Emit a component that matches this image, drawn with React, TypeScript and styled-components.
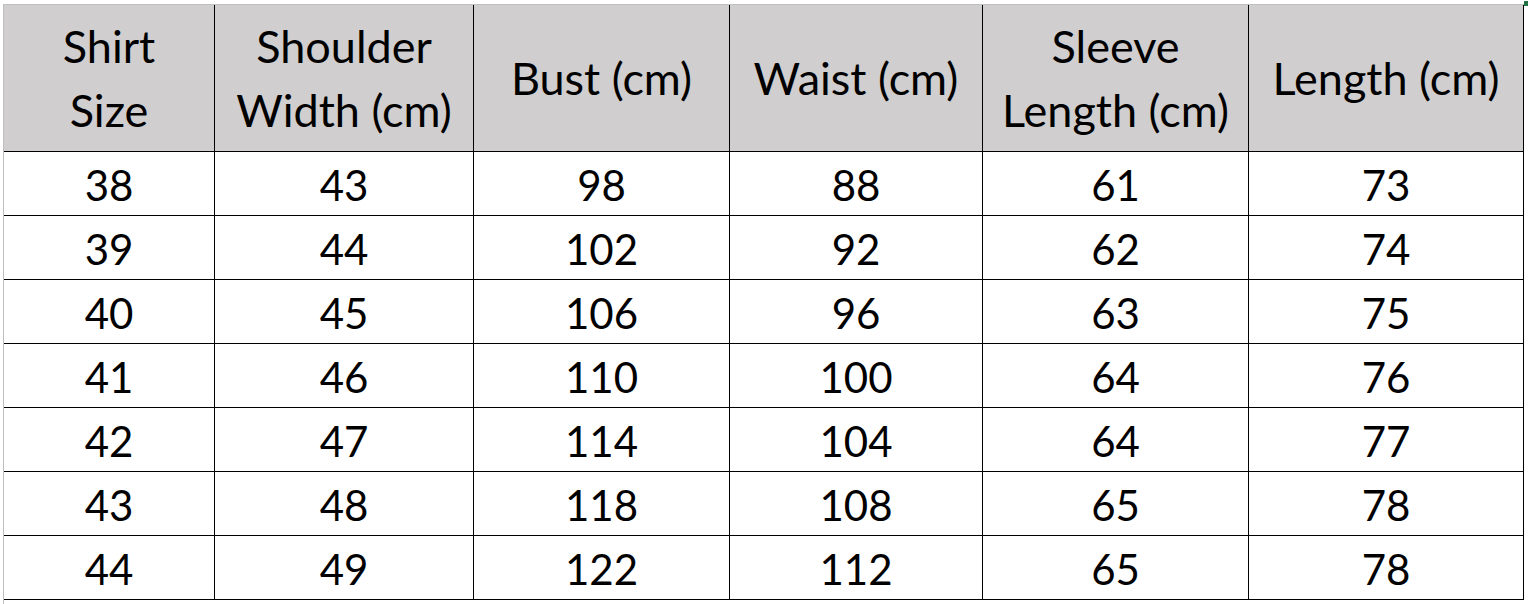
import React from "react";
import styled, { createGlobalStyle } from "styled-components";

type SizeRow = {
  size: number;
  shoulder: number;
  bust: number;
  waist: number;
  sleeve: number;
  length: number;
};

const columns: { label: string[]; width: number }[] = [
  { label: ["Shirt", "Size"], width: 210 },
  { label: ["Shoulder", "Width (cm)"], width: 258 },
  { label: ["Bust (cm)"], width: 255 },
  { label: ["Waist (cm)"], width: 252 },
  { label: ["Sleeve", "Length (cm)"], width: 265 },
  { label: ["Length (cm)"], width: 274 }
];

const rows: SizeRow[] = [
  { size: 38, shoulder: 43, bust: 98, waist: 88, sleeve: 61, length: 73 },
  { size: 39, shoulder: 44, bust: 102, waist: 92, sleeve: 62, length: 74 },
  { size: 40, shoulder: 45, bust: 106, waist: 96, sleeve: 63, length: 75 },
  { size: 41, shoulder: 46, bust: 110, waist: 100, sleeve: 64, length: 76 },
  { size: 42, shoulder: 47, bust: 114, waist: 104, sleeve: 64, length: 77 },
  { size: 43, shoulder: 48, bust: 118, waist: 108, sleeve: 65, length: 78 },
  { size: 44, shoulder: 49, bust: 122, waist: 112, sleeve: 65, length: 78 }
];

const GlobalStyle = createGlobalStyle`
  html, body {
    margin: 0;
    padding: 0;
    background: #ffffff;
    overflow: hidden;
  }
  body {
    font-family: Lato, "Open Sans", sans-serif;
    color: #000000;
  }
`;

const Sheet = styled.div`
  position: relative;
  margin: 4px 0 0 3px;
  height: 600px;
  border-top: 1px solid #bfbfbf;
  border-left: 1px solid #bfbfbf;
  background: #ffffff;
`;

const SelectionMark = styled.div`
  position: absolute;
  top: -4px;
  right: 0;
  width: 4px;
  height: 5px;
  background: #217346;
`;

const Grid = styled.div<{ template: string }>`
  display: grid;
  grid-template-columns: ${({ template }) => template};
  grid-template-rows: 146px repeat(7, 63px);
  gap: 1px;
  width: max-content;
  padding: 0 1px 1px 0;
  background: #000000;
`;

const HeaderCell = styled.div`
  display: flex;
  flex-direction: column;
  align-items: center;
  justify-content: center;
  background: #d0cece;
  font-size: 45px;
  line-height: 64px;
  white-space: nowrap;
`;

const Cell = styled.div`
  display: flex;
  align-items: center;
  justify-content: center;
  background: #ffffff;
  font-size: 42px;
  padding-top: 2px;
`;

const App = () => {
  const template = columns.map(c => `${c.width}px`).join(" ");

  return (
    <>
      <GlobalStyle />
      <Sheet>
        <SelectionMark />
        <Grid template={template}>
          {columns.map(col => (
            <HeaderCell key={col.label.join(" ")}>
              {col.label.map(line => (
                <span key={line}>{line}</span>
              ))}
            </HeaderCell>
          ))}
          {rows.map(row => (
            <React.Fragment key={row.size}>
              <Cell>{row.size}</Cell>
              <Cell>{row.shoulder}</Cell>
              <Cell>{row.bust}</Cell>
              <Cell>{row.waist}</Cell>
              <Cell>{row.sleeve}</Cell>
              <Cell>{row.length}</Cell>
            </React.Fragment>
          ))}
        </Grid>
      </Sheet>
    </>
  );
};

export default App;
